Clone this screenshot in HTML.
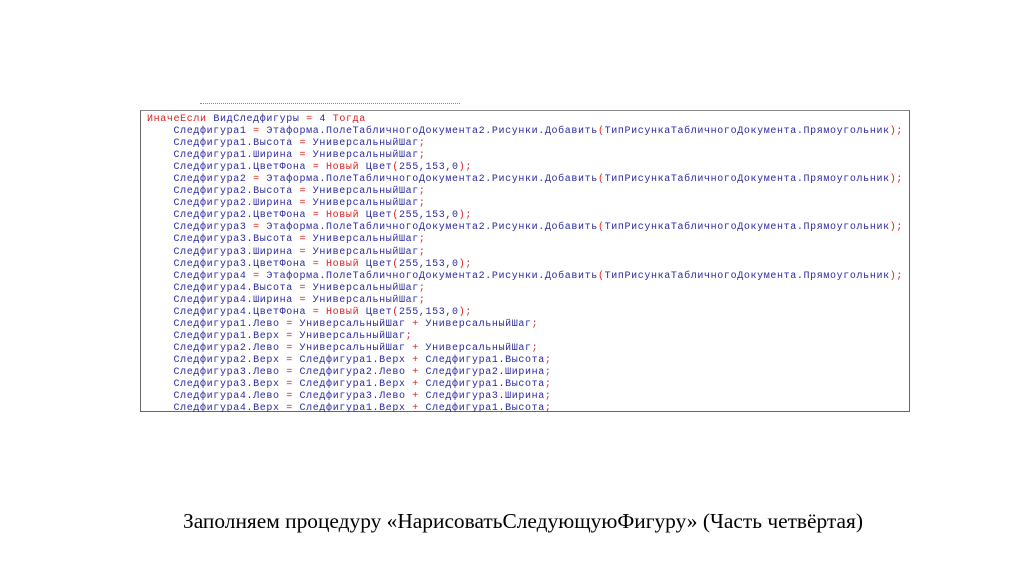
<!DOCTYPE html>
<html><head><meta charset="utf-8"><style>
body{margin:0;width:1024px;height:574px;background:#fff;position:relative;overflow:hidden}
.box{position:absolute;left:140px;top:110px;width:770px;height:302px;border:1px solid #666;border-top-color:#888;box-sizing:border-box}
.code{position:absolute;left:147px;top:114px;font-family:"Liberation Mono",monospace;font-size:10px;letter-spacing:0.63px;line-height:12.05px;color:#2a2aa0;white-space:pre}
.r{color:#e02020}
.cap{position:absolute;left:0;width:1046px;top:509px;text-align:center;font-family:"Liberation Serif",serif;font-size:21.4px;color:#000}
.top{position:absolute;left:200px;top:103px;width:260px;height:3px;border-top:1px dotted #888}
</style></head><body>
<div class="top"></div>
<div class="box"></div>
<div class="code"><span class="r">ИначеЕсли</span> ВидСледфигуры <span class="r">=</span> 4 <span class="r">Тогда</span>
    Следфигура1 <span class="r">=</span> Этаформа.ПолеТабличногоДокумента2.Рисунки.Добавить<span class="r">(</span>ТипРисункаТабличногоДокумента.Прямоугольник<span class="r">);</span>
    Следфигура1.Высота <span class="r">=</span> УниверсальныйШаг<span class="r">;</span>
    Следфигура1.Ширина <span class="r">=</span> УниверсальныйШаг<span class="r">;</span>
    Следфигура1.ЦветФона <span class="r">= Новый</span> Цвет<span class="r">(</span>255,153,0<span class="r">);</span>
    Следфигура2 <span class="r">=</span> Этаформа.ПолеТабличногоДокумента2.Рисунки.Добавить<span class="r">(</span>ТипРисункаТабличногоДокумента.Прямоугольник<span class="r">);</span>
    Следфигура2.Высота <span class="r">=</span> УниверсальныйШаг<span class="r">;</span>
    Следфигура2.Ширина <span class="r">=</span> УниверсальныйШаг<span class="r">;</span>
    Следфигура2.ЦветФона <span class="r">= Новый</span> Цвет<span class="r">(</span>255,153,0<span class="r">);</span>
    Следфигура3 <span class="r">=</span> Этаформа.ПолеТабличногоДокумента2.Рисунки.Добавить<span class="r">(</span>ТипРисункаТабличногоДокумента.Прямоугольник<span class="r">);</span>
    Следфигура3.Высота <span class="r">=</span> УниверсальныйШаг<span class="r">;</span>
    Следфигура3.Ширина <span class="r">=</span> УниверсальныйШаг<span class="r">;</span>
    Следфигура3.ЦветФона <span class="r">= Новый</span> Цвет<span class="r">(</span>255,153,0<span class="r">);</span>
    Следфигура4 <span class="r">=</span> Этаформа.ПолеТабличногоДокумента2.Рисунки.Добавить<span class="r">(</span>ТипРисункаТабличногоДокумента.Прямоугольник<span class="r">);</span>
    Следфигура4.Высота <span class="r">=</span> УниверсальныйШаг<span class="r">;</span>
    Следфигура4.Ширина <span class="r">=</span> УниверсальныйШаг<span class="r">;</span>
    Следфигура4.ЦветФона <span class="r">= Новый</span> Цвет<span class="r">(</span>255,153,0<span class="r">);</span>
    Следфигура1.Лево <span class="r">=</span> УниверсальныйШаг <span class="r">+</span> УниверсальныйШаг<span class="r">;</span>
    Следфигура1.Верх <span class="r">=</span> УниверсальныйШаг<span class="r">;</span>
    Следфигура2.Лево <span class="r">=</span> УниверсальныйШаг <span class="r">+</span> УниверсальныйШаг<span class="r">;</span>
    Следфигура2.Верх <span class="r">=</span> Следфигура1.Верх <span class="r">+</span> Следфигура1.Высота<span class="r">;</span>
    Следфигура3.Лево <span class="r">=</span> Следфигура2.Лево <span class="r">+</span> Следфигура2.Ширина<span class="r">;</span>
    Следфигура3.Верх <span class="r">=</span> Следфигура1.Верх <span class="r">+</span> Следфигура1.Высота<span class="r">;</span>
    Следфигура4.Лево <span class="r">=</span> Следфигура3.Лево <span class="r">+</span> Следфигура3.Ширина<span class="r">;</span>
    Следфигура4.Верх <span class="r">=</span> Следфигура1.Верх <span class="r">+</span> Следфигура1.Высота<span class="r">;</span></div>
<div class="cap">Заполняем процедуру «НарисоватьСледующуюФигуру» (Часть четвёртая)</div>
</body></html>
